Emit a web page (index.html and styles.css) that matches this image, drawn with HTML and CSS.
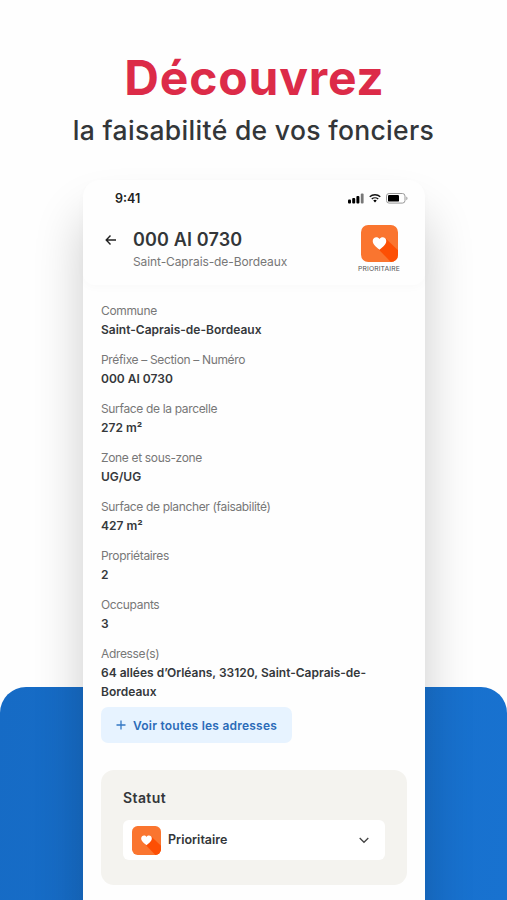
FILE: index.html
```html
<!DOCTYPE html>
<html lang="fr">
<head>
<meta charset="utf-8">
<title>Découvrez la faisabilité de vos fonciers</title>
<link rel="stylesheet" href="styles.css">
</head>
<body>
<svg class="defs" aria-hidden="true">
  <symbol id="priority" viewBox="0 0 36 36">
    <rect width="36" height="36" rx="7" fill="#fa752f"/>
    <path d="M24.500 13.500 36 24.500V29a7 7 0 0 1-7 7L16.500 23z" fill="#fd4f04"/>
    <path d="M18 24c-1-1-6.600-4.500-6.600-8.400 0-4.200 4.900-5 6.600-2 1.700-3 6.600-2.200 6.600 2 0 3.900-5.600 7.400-6.600 8.400z" fill="#fff"/>
  </symbol>
</svg>
<main class="poster">
  <header class="headline">
    <h1>Découvrez</h1>
    <p>la faisabilité de vos fonciers</p>
  </header>
  <div class="backdrop"></div>
  <section class="phone">
    <div class="top">
      <div class="statusbar">
        <span class="time">9:41</span>
        <div class="indicators">
          <svg width="16" height="11" viewBox="0 0 16 11"><rect x="0" y="6.500" width="3" height="4" rx="1"/><rect x="4.200" y="5" width="3" height="5.500" rx="1"/><rect x="8.400" y="3" width="3" height="7.500" rx="1"/><rect x="12.800" y="0.500" width="2.800" height="10" rx="1" fill="#777"/></svg>
          <svg width="12" height="10" viewBox="0 0 13 10"><g fill="none" stroke="#111" stroke-width="1.500"><path d="M.8 3.700a8.300 8.300 0 0 1 11.400 0"/><path d="M3 6.200a5.200 5.200 0 0 1 7 0"/></g><path d="M4.600 7.700a3 3 0 0 1 3.800 0L6.500 9.800z"/></svg>
          <svg width="22" height="11" viewBox="0 0 22 11"><rect x=".5" y=".5" width="18.500" height="9.600" rx="2.600" fill="none" stroke="#999"/><rect x="2" y="2" width="11" height="6.600" rx="1.200"/><path d="M20.300 3.500c1.600.6 1.600 3 0 3.700z" fill="#999"/></svg>
        </div>
      </div>
      <div class="titlebar">
        <svg class="back" width="12" height="12" viewBox="0 0 12 12" fill="none" stroke="#222" stroke-width="1.400"><path d="M11 6H1.500M5.500 1.500 1.200 6l4.300 4.500"/></svg>
        <div class="parcel">
          <h2>000 AI 0730</h2>
          <p>Saint-Caprais-de-Bordeaux</p>
        </div>
        <div class="badge">
          <svg width="37" height="37"><use href="#priority"/></svg>
          <span>PRIORITAIRE</span>
        </div>
      </div>
    </div>
    <dl class="fields">
      <div><dt>Commune</dt><dd>Saint-Caprais-de-Bordeaux</dd></div>
      <div><dt>Préfixe – Section – Numéro</dt><dd>000 AI 0730</dd></div>
      <div><dt>Surface de la parcelle</dt><dd>272 m²</dd></div>
      <div><dt>Zone et sous-zone</dt><dd>UG/UG</dd></div>
      <div><dt>Surface de plancher (faisabilité)</dt><dd>427 m²</dd></div>
      <div><dt>Propriétaires</dt><dd>2</dd></div>
      <div><dt>Occupants</dt><dd>3</dd></div>
      <div><dt>Adresse(s)</dt><dd>64 allées d’Orléans, 33120, Saint-Caprais-de-<br>Bordeaux</dd></div>
    </dl>
    <button class="more">
      <svg width="10" height="10" viewBox="0 0 10 10" stroke="#3478c4" stroke-width="1.300"><path d="M5 .5v9M.5 5h9"/></svg>
      <span>Voir toutes les adresses</span>
    </button>
    <section class="status">
      <h3>Statut</h3>
      <div class="select">
        <svg width="29" height="29"><use href="#priority"/></svg>
        <span>Prioritaire</span>
        <svg class="chevron" width="10" height="7" viewBox="0 0 10 7" fill="none" stroke="#444" stroke-width="1.300"><path d="m.7 1 4.300 4.300L9.300 1"/></svg>
      </div>
    </section>
  </section>
</main>
</body>
</html>
```

FILE: styles.css
```css
* { box-sizing: border-box; margin: 0; padding: 0; }
body { background: #fefefe; font-family: Inter, "Liberation Sans", sans-serif; color: #333639; }
.defs { position: absolute; width: 0; height: 0; }
.poster { position: relative; width: 507px; height: 900px; overflow: hidden; }
.headline { height: 180px; padding-top: 49px; text-align: center; }
.headline h1 { padding-left: 2px; font-size: 48px; line-height: 57px; font-weight: 650; color: #dc2b48; letter-spacing: 0.8px; }
.headline p { margin-top: 6px; font-size: 26.5px; line-height: 36px; font-weight: 500; letter-spacing: 0.32px; white-space: nowrap; }
.backdrop { position: absolute; left: 0; right: 0; top: 687px; bottom: 0; border-radius: 26px 26px 0 0; background: linear-gradient(100deg, #166bc5, #1872d0); }
.phone { position: relative; width: 342px; height: 740px; margin-left: 83px; border-radius: 17px 17px 0 0; background: #fefefe; box-shadow: 0 36px 50px rgba(0, 0, 0, 0.2); }
.top { height: 105px; border-radius: 17px 17px 12px 12px; box-shadow: 0 3px 8px rgba(0, 0, 0, 0.02); }
.statusbar { height: 36px; padding: 0 17px 0 32px; display: flex; align-items: center; justify-content: space-between; }
.time { font-size: 12.5px; font-weight: 600; color: #222; }
.indicators { display: flex; align-items: center; gap: 5px; }
.titlebar { display: flex; padding-left: 22px; }
.back { margin-top: 18px; }
.parcel { width: 220px; margin-left: 16px; padding-top: 12px; white-space: nowrap; }
.parcel h2 { font-size: 18px; line-height: 24px; font-weight: 600; letter-spacing: 0.15px; }
.parcel p { margin-top: 1px; font-size: 12px; line-height: 18px; color: #777; letter-spacing: -0.1px; }
.badge { width: 52px; padding-top: 9px; display: flex; flex-direction: column; align-items: center; }
.badge span { margin-top: 3px; font-size: 6.8px; line-height: 8px; font-weight: 400; color: #555; letter-spacing: 0.1px; }
.fields { padding: 17px 18px 0; display: grid; row-gap: 12px; font-size: 12px; white-space: nowrap; }
.fields dt { line-height: 18px; color: #777; letter-spacing: -0.34px; }
.fields dd { line-height: 19px; font-weight: 600; color: #35383b; }
.more { margin: 6px 0 0 18px; width: 191px; height: 36px; padding-left: 15px; display: flex; align-items: center; gap: 7px; border: 0; border-radius: 7px; background: #e7f3ff; color: #2b6bb8; font: 600 12px Inter, sans-serif; letter-spacing: 0.23px; white-space: nowrap; }
.status { margin: 27px 18px 0; height: 115px; padding: 18px 22px 0; border-radius: 13px; background: #f4f3ef; }
.status h3 { font-size: 14px; line-height: 20px; font-weight: 600; letter-spacing: 0.4px; }
.select { margin-top: 12px; height: 40px; padding: 0 16px 0 9px; display: flex; align-items: center; gap: 7px; border-radius: 6px; background: #fff; font-size: 12.500px; line-height: 16px; font-weight: 600; }
.chevron { margin-left: auto; }
```
